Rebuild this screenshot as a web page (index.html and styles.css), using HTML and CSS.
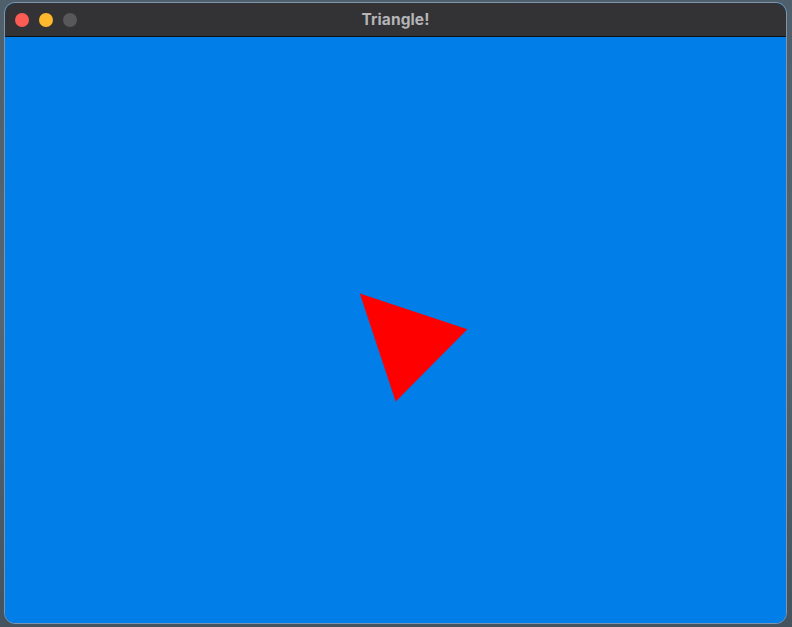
FILE: index.html
```html
<!DOCTYPE html>
<html>
<head>
<meta charset="utf-8">
<link rel="stylesheet" href="styles.css">
</head>
<body>
<div class="desktop">
  <div class="window">
    <div class="titlebar">
      <div class="lights">
        <span class="light red"></span>
        <span class="light yellow"></span>
        <span class="light gray"></span>
      </div>
      <div class="title">Triangle!</div>
    </div>
    <div class="canvas">
      <svg class="scene" viewBox="0 0 781 585" width="781" height="585">
        <polygon points="354.8,256.6 462.4,292.2 390.7,364.6" fill="#ff0000"/>
      </svg>
    </div>
  </div>
</div>
</body>
</html>
```
FILE: styles.css
```css
html, body {
  margin: 0;
  padding: 0;
}
.desktop {
  width: 792px;
  height: 627px;
  background: linear-gradient(180deg, #4f5f6b 0%, #56656f 50%, #44535e 100%);
  padding: 2px 0 0 4px;
  box-sizing: border-box;
  overflow: hidden;
}
.window {
  width: 783px;
  height: 622px;
  box-sizing: border-box;
  border: 1px solid #7e95ad;
  border-radius: 11px;
  overflow: hidden;
  display: flex;
  flex-direction: column;
  background: #017ee7;
}
.titlebar {
  height: 33px;
  flex: none;
  background: #333336;
  border-bottom: 1px solid #101012;
  display: flex;
  align-items: center;
  position: relative;
  font-family: "Inter", "Liberation Sans", sans-serif;
}
.lights {
  display: flex;
  gap: 10px;
  padding-left: 10px;
  padding-top: 1px;
}
.light {
  width: 14px;
  height: 14px;
  border-radius: 50%;
  display: block;
}
.red { background: #fd5c55; }
.yellow { background: #fdb82e; }
.gray { background: #58585b; }
.title {
  position: absolute;
  left: 0;
  right: 0;
  top: 0;
  bottom: 0;
  display: flex;
  align-items: center;
  justify-content: center;
  color: #b5b5b7;
  font-weight: 700;
  font-size: 15.5px;
  letter-spacing: 0.1px;
}
.canvas {
  flex: 1;
  background: #017ee7;
  position: relative;
}
.scene {
  display: block;
}
```
